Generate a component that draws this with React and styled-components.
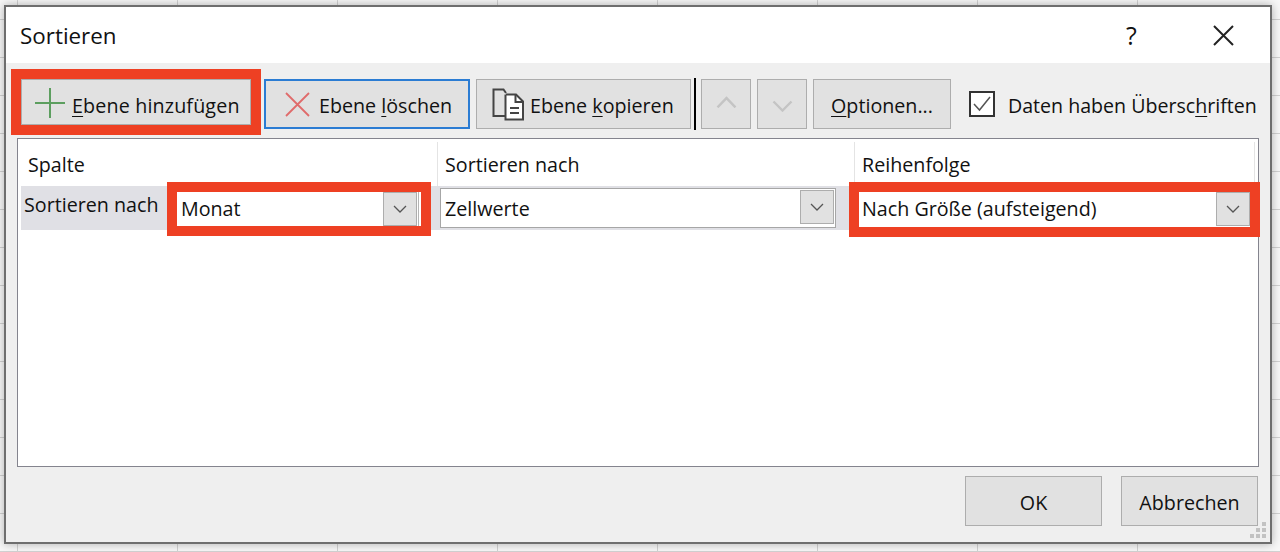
import React from 'react';
import styled, { createGlobalStyle } from 'styled-components';

const GlobalStyle = createGlobalStyle`
    html, body {
        margin: 0;
        height: 552px;
        overflow: hidden;
    }
    body {
        font-family: 'Open Sans', 'Noto Sans', sans-serif;
        color: #111;
        background-color: #f8f8f8;
        background-image:
            linear-gradient(to right, #d2d2d2 1px, transparent 1px),
            linear-gradient(to bottom, #d2d2d2 1px, transparent 1px);
        background-size: 160px 38px;
        background-position: 17px 19px;
    }
    * {
        box-sizing: border-box;
    }
`;

const DialogWindow = styled.div`
    position: relative;
    display: flex;
    flex-direction: column;
    width: 1268px;
    height: 539px;
    margin: 5px 0 0 4px;
    border: 2px solid #6e6e6e;
    background: #efefef;
    box-shadow: 0 0 9px rgba(0, 0, 0, 0.3);
`;

const TitleBar = styled.div`
    display: flex;
    align-items: center;
    height: 56px;
    padding: 0 36px 0 14px;
    background: #fff;
`;

const Title = styled.div`
    flex: 1;
    font-size: 22.4px;
`;

const HelpMark = styled.div`
    width: 13px;
    margin-right: 74px;
    font-size: 25px;
    line-height: 1;
`;

const Toolbar = styled.div`
    display: flex;
    align-items: flex-start;
    padding: 16px 0 9px 15px;
    height: 75px;
`;

const Button = styled.button`
    display: flex;
    flex: none;
    align-items: center;
    justify-content: ${(props) => (props.$icon ? 'flex-start' : 'center')};
    width: ${(props) => props.$width}px;
    height: ${(props) => props.$height || 50}px;
    margin-left: ${(props) => props.$left || 0}px;
    padding: ${(props) => (props.$icon ? '0 0 0 ' + props.$icon + 'px' : 0)};
    border: ${(props) => (props.$focus ? '2px solid #2b7cd3' : '1px solid #adadad')};
    outline: ${(props) => (props.$marked ? '10px solid #ee4023' : 'none')};
    background: #e1e1e1;
    color: #111;
    font-family: inherit;
    font-size: 19.7px;
    white-space: nowrap;

    svg {
        flex: none;
    }

    u {
        text-underline-offset: 3px;
    }
`;

const ButtonLabel = styled.span`
    padding-top: ${(props) => props.$top || 2}px;
    letter-spacing: ${(props) => props.$spacing || 0}px;
`;

const Separator = styled.div`
    flex: none;
    width: 2px;
    height: 52px;
    margin: -1px 5px 0 3px;
    background: #000;
`;

const CheckLabel = styled.label`
    display: flex;
    flex: none;
    align-items: center;
    gap: 13px;
    height: 50px;
    margin-left: 18px;
    font-size: 19.6px;
    white-space: nowrap;

    u {
        text-underline-offset: 3px;
    }
`;

const CheckText = styled.span`
    padding-top: 2px;
`;

const CheckBox = styled.span`
    display: flex;
    align-items: center;
    justify-content: center;
    width: 26px;
    height: 26px;
    border: 2px solid #333;
    background: #fff;
`;

const SortTable = styled.div`
    flex: none;
    height: 329px;
    margin: 0 11px;
    border: 1px solid #84848e;
    background: #fff;
`;

const HeaderRow = styled.div`
    display: grid;
    grid-template-columns: 420px 417px 400px;
    height: 47px;
    padding-top: 3px;
`;

const HeaderCell = styled.div`
    padding: 9px 0 0 ${(props) => props.$left}px;
    border-right: 1px solid #e4e4e4;
    font-size: 19.7px;
`;

const SortRow = styled.div`
    display: grid;
    grid-template-columns: 156px 263px 419px 395px;
    align-items: center;
    height: 44px;
    margin-left: 3px;
    margin-right: 4px;
    background: #e0e0e5;
`;

const RowLabel = styled.div`
    padding: 0 0 7px 3px;
    font-size: 19.7px;
    white-space: nowrap;
`;

const Combo = styled.div`
    display: flex;
    align-items: flex-start;
    width: ${(props) => props.$width}px;
    height: ${(props) => props.$height}px;
    margin-top: ${(props) => props.$top || 0}px;
    padding-right: ${(props) => props.$end}px;
    border: ${(props) => (props.$marked ? 'none' : '1px solid #a6a6a6')};
    outline: ${(props) => (props.$marked ? '10px solid #ee4023' : 'none')};
    background: #fff;
    box-shadow: ${(props) => (props.$edge ? 'inset -2px 0 0 #fff, inset -3px 0 0 #b4b4b4' : 'none')};
`;

const ComboText = styled.div`
    flex: 1;
    align-self: center;
    padding-left: ${(props) => props.$left}px;
    padding-bottom: ${(props) => props.$bottom || 0}px;
    font-size: 19.7px;
    white-space: nowrap;
`;

const ComboArrow = styled.div`
    display: flex;
    flex: none;
    align-items: center;
    justify-content: center;
    width: 34px;
    height: 34px;
    margin-top: ${(props) => props.$top || 0}px;
    border: 1px solid #adadad;
    background: #e1e1e1;
`;

const Footer = styled.div`
    display: flex;
    justify-content: flex-end;
    gap: 19px;
    padding: 9px 12px 0 0;
`;

const Grip = styled.svg`
    position: absolute;
    right: 4px;
    bottom: 4px;
`;

const PlusIcon = styled.svg`
    margin: 2px 6px 0 0;
`;

const DeleteIcon = styled.svg`
    margin-right: 9px;
`;

const CopyGlyph = styled.svg`
    margin-right: 5px;
`;

const ChevronGlyph = styled.svg`
    margin-top: ${(props) => props.$shift || 0}px;
`;

const Chevron = ({ up, size = 14, color = '#555', width = 1.3, shift }) => (
    <ChevronGlyph $shift={shift} width={size} height={size * 0.6} viewBox="0 0 14 8.4" fill="none" stroke={color} strokeWidth={width}>
        <path d={up ? 'M1 7.6 L7 1.4 L13 7.6' : 'M1 1 L7 7 L13 1'} />
    </ChevronGlyph>
);

const CopyIcon = () => (
    <CopyGlyph width="33" height="33" viewBox="0 0 33 33" fill="none" stroke="#444" strokeWidth="2">
        <path d="M14 28 H1.5 V1.5 H11.5 L14 5" />
        <path d="M14 6.5 H24 L31 13.5 V31.5 H13.5 V6.5" fill="#fff" />
        <path d="M23.5 7 V14 H31" />
        <path d="M18 20 H27 M18 25 H27" />
    </CopyGlyph>
);

const App = () => {
    return (
        <>
            <GlobalStyle />
            <DialogWindow>
                <TitleBar>
                    <Title>Sortieren</Title>
                    <HelpMark>?</HelpMark>
                    <svg width="21" height="21" viewBox="0 0 21 21" stroke="#222" strokeWidth="2">
                        <path d="M1 1 L20 20 M20 1 L1 20" />
                    </svg>
                </TitleBar>
                <Toolbar>
                    <Button $width={230} $height={46} $icon={12} $marked>
                        <PlusIcon width="32" height="32" viewBox="0 0 32 32" stroke="#5c9e5f" strokeWidth="2">
                            <path d="M16 1 V31 M1 16 H31" />
                        </PlusIcon>
                        <ButtonLabel $top={6} $spacing={0.15}><u>E</u>bene hinzufügen</ButtonLabel>
                    </Button>
                    <Button $width={206} $icon={19} $left={13} $focus>
                        <DeleteIcon width="25" height="25" viewBox="0 0 25 25" stroke="#e06b6b" strokeWidth="1.8">
                            <path d="M1 1 L24 24 M24 1 L1 24" />
                        </DeleteIcon>
                        <ButtonLabel>Ebene <u>l</u>öschen</ButtonLabel>
                    </Button>
                    <Button $width={215} $icon={15} $left={6}>
                        <CopyIcon />
                        <ButtonLabel>Ebene <u>k</u>opieren</ButtonLabel>
                    </Button>
                    <Separator />
                    <Button $width={50}>
                        <Chevron up size={21} color="#c4c4c4" width={1.6} shift={-4} />
                    </Button>
                    <Button $width={50} $left={6}>
                        <Chevron size={21} color="#c4c4c4" width={1.6} shift={4} />
                    </Button>
                    <Button $width={138} $left={6}>
                        <ButtonLabel><u>O</u>ptionen...</ButtonLabel>
                    </Button>
                    <CheckLabel>
                        <CheckBox>
                            <svg width="18" height="16" viewBox="0 0 18 16" fill="none" stroke="#555" strokeWidth="1.5">
                                <path d="M1 8 L6.5 14 L17 1" />
                            </svg>
                        </CheckBox>
                        <CheckText>Daten haben Übersc<u>h</u>riften</CheckText>
                    </CheckLabel>
                </Toolbar>
                <SortTable>
                    <HeaderRow>
                        <HeaderCell $left={10}>Spalte</HeaderCell>
                        <HeaderCell $left={7}>Sortieren nach</HeaderCell>
                        <HeaderCell $left={7}>Reihenfolge</HeaderCell>
                    </HeaderRow>
                    <SortRow>
                        <RowLabel>Sortieren nach</RowLabel>
                        <Combo $width={244} $height={34} $end={4} $top={2} $marked $edge>
                            <ComboText $left={4} $bottom={2}>Monat</ComboText>
                            <ComboArrow><Chevron /></ComboArrow>
                        </Combo>
                        <Combo $width={396} $height={40} $end={1}>
                            <ComboText $left={4}>Zellwerte</ComboText>
                            <ComboArrow $top={1}><Chevron /></ComboArrow>
                        </Combo>
                        <Combo $width={391} $height={35} $end={0} $top={3} $marked>
                            <ComboText $left={3} $bottom={2}>Nach Größe (aufsteigend)</ComboText>
                            <ComboArrow><Chevron /></ComboArrow>
                        </Combo>
                    </SortRow>
                </SortTable>
                <Footer>
                    <Button $width={137}><ButtonLabel>OK</ButtonLabel></Button>
                    <Button $width={137}><ButtonLabel>Abbrechen</ButtonLabel></Button>
                </Footer>
                <Grip width="16" height="16" viewBox="0 0 16 16" fill="#c2c2c2">
                    <rect x="12" y="0" width="4" height="4" />
                    <rect x="6" y="6" width="4" height="4" />
                    <rect x="12" y="6" width="4" height="4" />
                    <rect x="0" y="12" width="4" height="4" />
                    <rect x="6" y="12" width="4" height="4" />
                    <rect x="12" y="12" width="4" height="4" />
                </Grip>
            </DialogWindow>
        </>
    );
};

export default App;
